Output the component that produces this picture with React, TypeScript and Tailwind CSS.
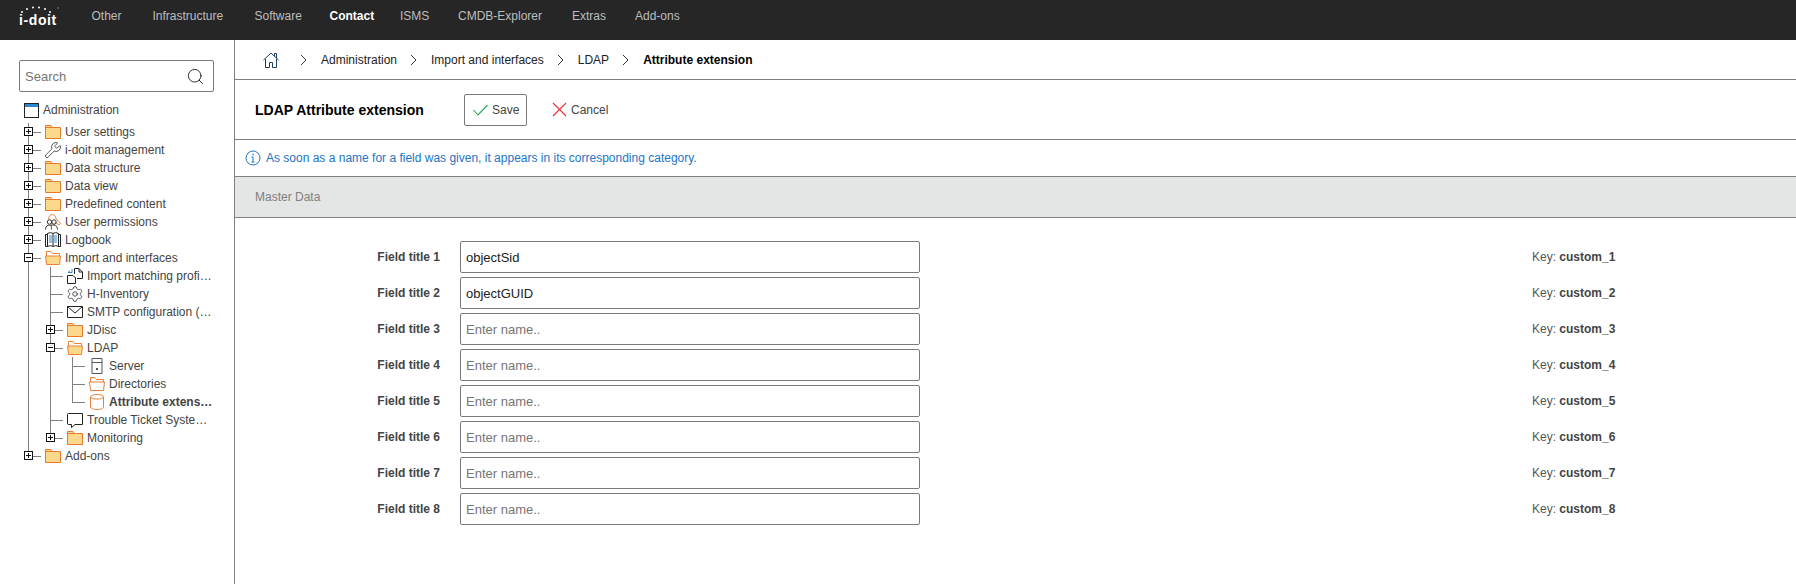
import React from "react"
import { Search, Settings, Wrench } from "lucide-react"

const navItems = [
  { label: "Other", width: "w-[61px]" },
  { label: "Infrastructure", width: "w-[102px]" },
  { label: "Software", width: "w-[75px]" },
  { label: "Contact", width: "w-[70.5px]", active: true },
  { label: "ISMS", width: "w-[58px]" },
  { label: "CMDB-Explorer", width: "w-[114px]" },
  { label: "Extras", width: "w-[63px]" },
  { label: "Add-ons", width: "w-[70px]" },
]

function FolderIcon({ open, empty }: { open?: boolean; empty?: boolean }) {
  const fill = empty ? "#ffffff" : "#fad98c"
  if (open) {
    return (
      <svg width="16" height="16" viewBox="0 0 16 16" fill="none" stroke="#e9813a" strokeWidth="1">
        <path d="M1.5 6V1.5H6L7.5 3.5H14.5V6" fill="#ffffff" />
        <path d="M.5 6H15.5L14.5 14.5H1.5Z" fill={fill} />
      </svg>
    )
  }
  return (
    <svg width="16" height="16" viewBox="0 0 16 16" fill="none" stroke="#e9782d" strokeWidth="1">
      <path d="M.5 14.5V1.5H6L7.5 3.5H15.5V14.5Z" fill={fill} />
      <path d="M.5 3.5H7.5" />
    </svg>
  )
}

function PermissionIcon() {
  return (
    <svg width="16" height="16" viewBox="0 0 16 16" fill="none" strokeWidth="1">
      <path d="M3.5 5.5C3.5 2 5.5.5 7.5.5C9.5.5 11 2.5 11 5L15.5 9L14 11L10 8" stroke="#e98a48" />
      <circle cx="4.5" cy="8" r="2.2" stroke="#333333" />
      <circle cx="9" cy="8" r="2.2" stroke="#333333" />
      <path d="M.5 15.5C.5 12.5 2.5 11 4.5 11C6 11 6.5 12 6.5 15.5M5.5 11.5C6.5 11 7.5 10.8 9 11C11 11.2 12.5 13 12.5 15.5" stroke="#333333" />
    </svg>
  )
}

function LogbookIcon() {
  return (
    <svg width="16" height="16" viewBox="0 0 16 16" fill="none" stroke="#222222" strokeWidth="1">
      <path d="M.5 2.5H2.5V14.5H.5ZM13.5 2.5H15.5V14.5H13.5Z" />
      <path d="M2.5 14.5V1.5C4.5.5 6.5.5 8 1.5C9.5.5 11.5.5 13.5 1.5V14.5C11.5 13.5 9.5 13.5 8 14.5C6.5 13.5 4.5 13.5 2.5 14.5Z" />
      <path d="M8 1.5V14.5" />
      <path d="M4 4H7M4 6H7M4 8H7M4 10H7M9 4H12M9 6H12M9 8H12M9 10H12" stroke="#2f86d1" />
    </svg>
  )
}

function ImportIcon() {
  return (
    <svg width="16" height="16" viewBox="0 0 16 16" fill="none" stroke="#222222" strokeWidth="1">
      <path d="M7.5 6V.5H12L15.5 4V10.5H10" />
      <path d="M12 .5V4H15.5" />
      <path d="M.5 7.5H6L8.5 10V15.5H.5Z" fill="#ffffff" />
      <path d="M1 4.5H5V1M1 4.5L3 2.8" stroke="#2f86d1" />
    </svg>
  )
}

function MailIcon() {
  return (
    <svg width="16" height="16" viewBox="0 0 16 16" fill="none" stroke="#222222" strokeWidth="1">
      <path d="M.5 2.5H15.5V13.5H.5Z" />
      <path d="M.5 2.5L8 9L15.5 2.5" />
    </svg>
  )
}

function ServerIcon() {
  return (
    <svg width="16" height="16" viewBox="0 0 16 16" fill="none" stroke="#555555" strokeWidth="1">
      <path d="M3 .5H13V15.5H3Z" />
      <path d="M3 4.5H13" />
      <rect x="7" y="10" width="2" height="2" fill="#555555" stroke="none" />
    </svg>
  )
}

function DatabaseIcon() {
  return (
    <svg width="16" height="16" viewBox="0 0 16 16" fill="none" stroke="#e9813a" strokeWidth="1">
      <ellipse cx="8" cy="2.8" rx="6.5" ry="2.3" />
      <path d="M1.5 2.8V13C1.5 14.5 5 15.5 8 15.5C11 15.5 14.5 14.5 14.5 13V2.8" />
    </svg>
  )
}

function CommentIcon() {
  return (
    <svg width="16" height="16" viewBox="0 0 16 16" fill="none" stroke="#222222" strokeWidth="1">
      <path d="M1.5 1.5H15.5V12.5H8L4.5 15.5V12.5H1.5C.8 12.5.5 12 .5 11.5V2.5C.5 2 .8 1.5 1.5 1.5Z" />
    </svg>
  )
}

function TreeBox({ open }: { open?: boolean }) {
  return (
    <span className="relative z-10 flex h-[9px] w-[9px] items-center justify-center border border-[#111111] bg-white">
      <span className="absolute h-px w-[5px] bg-[#111111]" />
      {!open && <span className="absolute h-[5px] w-px bg-[#111111]" />}
    </span>
  )
}

type TreeRowProps = {
  guides?: boolean[]
  last?: boolean
  box?: "open" | "closed"
  icon: React.ReactNode
  label: string
  bold?: boolean
}

// each level is a 22px column with a line in it, the node's own column also has the dash to the icon
function TreeRow({ guides = [], last, box, icon, label, bold }: TreeRowProps) {
  return (
    <div className="flex h-[18px] items-center whitespace-nowrap">
      {guides.map((on, i) => (
        <div key={i} className="h-full w-[22px] shrink-0 pl-[10px]">
          {on && <div className="h-full w-px bg-[#808080]" />}
        </div>
      ))}
      <div className="relative flex h-full w-[27px] shrink-0">
        <div className={`absolute left-[10px] top-0 w-px bg-[#808080] ${last ? "h-[9px]" : "h-full"}`} />
        <div className="absolute left-[10px] top-[9px] h-px w-[13px] bg-[#808080]" />
        {box && (
          <div className="absolute left-[6px] top-[4px]">
            <TreeBox open={box === "open"} />
          </div>
        )}
      </div>
      <div className="flex h-4 w-4 shrink-0 items-center justify-center">{icon}</div>
      <span className={`ml-1 ${bold ? "font-bold" : ""}`}>{label}</span>
    </div>
  )
}

function Sidebar() {
  return (
    <aside className="w-[234px] shrink-0 pt-5 text-[12px] leading-[14px] text-[#444444]">
      <div className="ml-[19px] flex h-8 w-[195px] items-center rounded-[2px] border border-[#7a7a7a] pl-[5px] pr-2">
        <input
          placeholder="Search"
          className="mt-px w-full min-w-0 text-[13px] outline-none placeholder:text-[#757575]"
        />
        <Search size={19} strokeWidth={1.1} className="shrink-0 text-[#111111]" />
      </div>

      <div className="ml-6 mt-[9px] flex h-[18px] items-center">
        <svg width="15" height="15" viewBox="0 0 15 15" fill="none">
          <rect x=".5" y=".5" width="14" height="14" stroke="#222222" />
          <rect x="1" y="1" width="13" height="3" fill="#2f86d1" />
        </svg>
        <span className="ml-[4px]">Administration</span>
      </div>

      <div className="ml-[18px] mt-[4px]">
        <TreeRow box="closed" icon={<FolderIcon />} label="User settings" />
        <TreeRow box="closed" icon={<Wrench size={18} strokeWidth={1} className="shrink-0 text-[#222222]" />} label="i-doit management" />
        <TreeRow box="closed" icon={<FolderIcon />} label="Data structure" />
        <TreeRow box="closed" icon={<FolderIcon />} label="Data view" />
        <TreeRow box="closed" icon={<FolderIcon />} label="Predefined content" />
        <TreeRow box="closed" icon={<PermissionIcon />} label="User permissions" />
        <TreeRow box="closed" icon={<LogbookIcon />} label="Logbook" />
        <TreeRow box="open" icon={<FolderIcon open />} label="Import and interfaces" />
        <TreeRow guides={[true]} icon={<ImportIcon />} label="Import matching profi…" />
        <TreeRow guides={[true]} icon={<Settings size={18} strokeWidth={1} className="shrink-0 text-[#222222]" />} label="H-Inventory" />
        <TreeRow guides={[true]} icon={<MailIcon />} label="SMTP configuration (…" />
        <TreeRow guides={[true]} box="closed" icon={<FolderIcon />} label="JDisc" />
        <TreeRow guides={[true]} box="open" icon={<FolderIcon open />} label="LDAP" />
        <TreeRow guides={[true, true]} icon={<ServerIcon />} label="Server" />
        <TreeRow guides={[true, true]} icon={<FolderIcon open empty />} label="Directories" />
        <TreeRow guides={[true, true]} last icon={<DatabaseIcon />} label="Attribute extens…" bold />
        <TreeRow guides={[true]} icon={<CommentIcon />} label="Trouble Ticket Syste…" />
        <TreeRow guides={[true]} last box="closed" icon={<FolderIcon />} label="Monitoring" />
        <TreeRow last box="closed" icon={<FolderIcon />} label="Add-ons" />
      </div>
    </aside>
  )
}

function Crumb() {
  return (
    <svg width="14" height="14" viewBox="0 0 14 14" fill="none" stroke="#333333" strokeWidth="1" className="shrink-0">
      <path d="M5 2L10 7L5 12" />
    </svg>
  )
}

function Breadcrumbs() {
  return (
    <div className="flex h-10 items-center border-b border-[#808080] pl-7 text-[#222222]">
      <svg width="16" height="16" viewBox="0 0 16 16" fill="none" stroke="#1d3f5e" strokeWidth="1">
        <path d="M.5 8L8 1L15.5 8M11.5 4.3V1.5H13.5V6.2" />
        <path d="M2.5 7V15.5H6.5V10.5H9.5V15.5H13.5V7" />
      </svg>
      <div className="ml-[17px]">
        <Crumb />
      </div>
      <span className="ml-[11px]">Administration</span>
      <div className="ml-[9px]">
        <Crumb />
      </div>
      <span className="ml-[11px]">Import and interfaces</span>
      <div className="ml-[9px]">
        <Crumb />
      </div>
      <span className="ml-[11px]">LDAP</span>
      <div className="ml-[9px]">
        <Crumb />
      </div>
      <span className="ml-[11px] font-bold text-black">Attribute extension</span>
    </div>
  )
}

function Toolbar() {
  return (
    <div className="flex h-[60px] items-center border-b border-[#808080] pl-5">
      <h1 className="w-[209px] text-[14px] font-bold text-black">LDAP Attribute extension</h1>
      <button className="flex h-8 w-[63px] items-center rounded-[2px] border border-[#7a7a7a] pl-2 text-[#444444]">
        <svg width="15" height="15" viewBox="0 0 15 15" fill="none" stroke="#27a35a" strokeWidth="1.1">
          <path d="M.5 8L5 13L14.5 3" />
        </svg>
        <span className="ml-[4px]">Save</span>
      </button>
      <button className="ml-[25px] flex items-center text-[#444444]">
        <svg width="15" height="15" viewBox="0 0 15 15" fill="none" stroke="#e8303a" strokeWidth="1.1">
          <path d="M1 1L14 14M14 1L1 14" />
        </svg>
        <span className="ml-1">Cancel</span>
      </button>
    </div>
  )
}

function FieldRow({ n, value }: { n: number; value?: string }) {
  return (
    <div className="flex h-8 items-center">
      <label className="w-[205px] text-right font-bold text-[#444444]">Field title {n}</label>
      <input
        defaultValue={value}
        placeholder="Enter name.."
        className="ml-5 h-8 w-[460px] rounded-[2px] border border-[#7a7a7a] px-[5px] text-[13px] text-[#222222] outline-none placeholder:text-[#757575]"
      />
      <span className="ml-[612px] text-[#555555]">
        Key: <b className="text-[#444444]">custom_{n}</b>
      </span>
    </div>
  )
}

export default function App() {
  return (
    <div className="flex h-[584px] flex-col overflow-hidden bg-white font-['Liberation_Sans',Arial,sans-serif] text-[12px] leading-[14px]">
      <header className="flex h-10 shrink-0 items-start bg-[#262626] pt-[9px] text-[#bdbdbd]">
        <div className="relative ml-[19px] w-[72.5px]">
          <svg width="40" height="8" viewBox="0 0 40 8" className="absolute -top-[3px] left-0" fill="#ffffff">
            <circle cx="3" cy="6" r="1" />
            <circle cx="8" cy="3" r="1" />
            <circle cx="14" cy="1.5" r="1" />
            <circle cx="20" cy="1.5" r="1" />
            <circle cx="26" cy="3" r="1" />
            <circle cx="31" cy="6" r="1" />
            <circle cx="39" cy="2" r=".7" fill="#999999" />
          </svg>
          <span className="mt-[3px] block text-[14px] font-bold leading-[16px] tracking-[0.6px] text-white">i-doit</span>
        </div>
        {navItems.map((item) => (
          <span key={item.label} className={`${item.width} ${item.active ? "font-bold text-white" : ""}`}>
            {item.label}
          </span>
        ))}
      </header>

      <div className="flex min-h-0 flex-1">
        <Sidebar />
        <main className="min-w-0 flex-1 border-l border-[#808080]">
          <Breadcrumbs />
          <Toolbar />
          <div className="flex h-[37px] items-center border-b border-[#808080] pl-[10px] text-[#1b74c4]">
            <svg width="16" height="16" viewBox="0 0 16 16" fill="none" stroke="#1b74c4" strokeWidth="1">
              <circle cx="8" cy="8" r="7" />
              <path d="M8 7V12M6.5 12H9.5M6.5 7H8" />
              <rect x="7.3" y="3.8" width="1.4" height="1.4" fill="#1b74c4" stroke="none" />
            </svg>
            <span className="ml-[5px]">As soon as a name for a field was given, it appears in its corresponding category.</span>
          </div>
          <div className="flex h-[41px] items-center border-b border-[#808080] bg-[#e4e6e5] pl-5 text-[#808080]">
            Master Data
          </div>
          <div className="flex flex-col gap-1 pt-[23px]">
            <FieldRow n={1} value="objectSid" />
            <FieldRow n={2} value="objectGUID" />
            <FieldRow n={3} />
            <FieldRow n={4} />
            <FieldRow n={5} />
            <FieldRow n={6} />
            <FieldRow n={7} />
            <FieldRow n={8} />
          </div>
        </main>
      </div>
    </div>
  )
}
